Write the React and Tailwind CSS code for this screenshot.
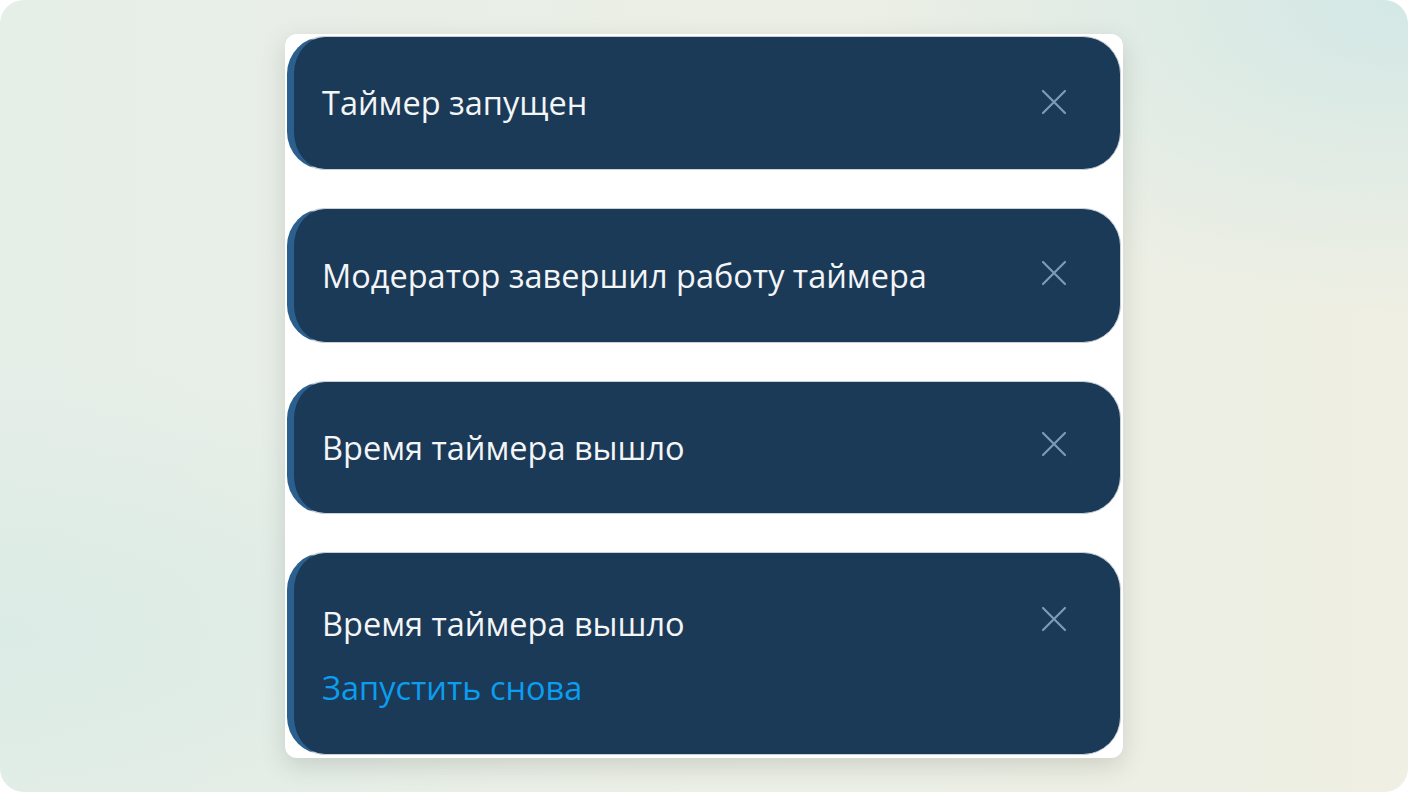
import React from "react";

function CloseX({ className = "" }) {
  return (
    <svg width="28" height="28" viewBox="0 0 28 28" className={className} aria-hidden="true">
      <path d="M3 3 L25 25 M25 3 L3 25" stroke="#7b9bb6" strokeWidth="2.2" strokeLinecap="round" fill="none" />
    </svg>
  );
}

function Toast({ title, action, height, closeTop }) {
  return (
    <div
      className="relative flex w-full rounded-[38px] border border-[#c9d1d8] border-l-[7px] border-l-[#2b5f8e] bg-[#1b3a57]"
      style={{ height }}
    >
      {action ? (
        <div className="flex flex-col pl-[28px] pt-[50px]">
          <div className="text-[32.5px] leading-[42px] text-[#f3f5f7]">{title}</div>
          <div className="mt-[22px] text-[32.5px] leading-[42px] text-[#0b9df0]">{action}</div>
        </div>
      ) : (
        <div className="flex items-center pl-[28px] text-[32.5px] leading-[42px] text-[#f3f5f7]">{title}</div>
      )}
      <div className="absolute right-[52px]" style={{ top: closeTop }}>
        <CloseX />
      </div>
    </div>
  );
}

export default function App() {
  return (
    <div
      className="h-[792px] w-[1408px] bg-white"
      style={{ fontFamily: '"Open Sans", "Noto Sans", sans-serif' }}
    >
      <div className="flex h-full w-full justify-center rounded-[24px] bg-[radial-gradient(ellipse_at_100%_0%,#d3e8e6_0%,rgba(220,236,232,0)_28%),radial-gradient(ellipse_at_0%_80%,#dbebe5_0%,rgba(220,236,232,0)_30%),linear-gradient(90deg,#e6eee8_0%,#ebefe6_50%,#efefe3_100%)] pt-[34px]">
        <div className="flex h-[724px] w-[838px] flex-col gap-[38px] rounded-[12px] bg-white p-[2px] shadow-[0_8px_24px_rgba(60,70,60,0.18)]">
          <Toast title="Таймер запущен" height={134} closeTop={51} />
          <Toast title="Модератор завершил работу таймера" height={135} closeTop={50} />
          <Toast title="Время таймера вышло" height={133} closeTop={48} />
          <Toast title="Время таймера вышло" action="Запустить снова" height={203} closeTop={52} />
        </div>
      </div>
    </div>
  );
}
